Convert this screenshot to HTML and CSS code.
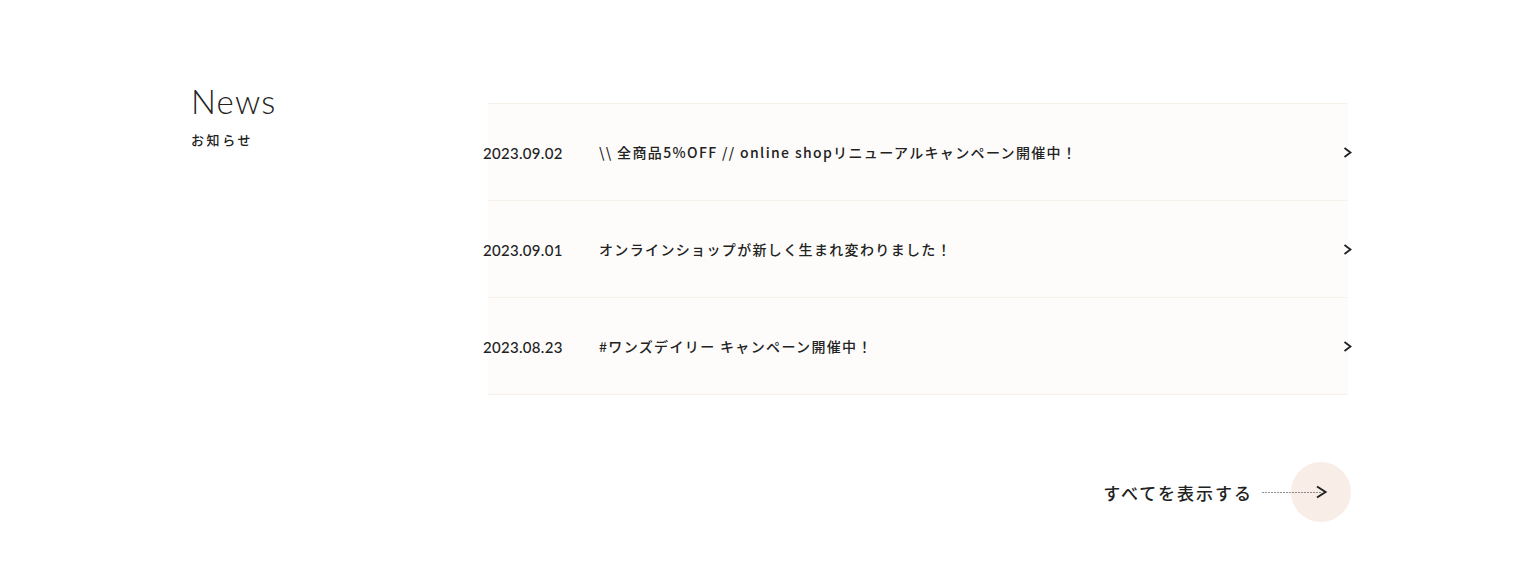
FILE: index.html
```html
<!DOCTYPE html>
<html lang="ja">
<head>
  <meta charset="UTF-8">
  <meta name="viewport" content="width=device-width, initial-scale=1.0">
  <title>News</title>
  <link rel="stylesheet" href="styles.css">
</head>
<body>
  <section class="news">
    <div class="news-head">
      <h2 class="news-title">News</h2>
      <p class="news-sub">お知らせ</p>
    </div>
    <div class="news-body">
      <ul class="news-list">
        <li class="news-item">
          <a href="#">
            <span class="news-date">2023.09.02</span>
            <span class="news-text">\\ 全商品5%OFF // online shopリニューアルキャンペーン開催中！</span>
            <svg class="news-arrow" width="9" height="11" viewBox="0 0 9 11"><polyline points="1.5,1 7.5,5.5 1.5,10" fill="none" stroke="#222" stroke-width="1.8"/></svg>
          </a>
        </li>
        <li class="news-item">
          <a href="#">
            <span class="news-date">2023.09.01</span>
            <span class="news-text">オンラインショップが新しく生まれ変わりました！</span>
            <svg class="news-arrow" width="9" height="11" viewBox="0 0 9 11"><polyline points="1.5,1 7.5,5.5 1.5,10" fill="none" stroke="#222" stroke-width="1.8"/></svg>
          </a>
        </li>
        <li class="news-item">
          <a href="#">
            <span class="news-date">2023.08.23</span>
            <span class="news-text">#ワンズデイリー キャンペーン開催中！</span>
            <svg class="news-arrow" width="9" height="11" viewBox="0 0 9 11"><polyline points="1.5,1 7.5,5.5 1.5,10" fill="none" stroke="#222" stroke-width="1.8"/></svg>
          </a>
        </li>
      </ul>
      <div class="news-more">
        <a href="#" class="more-link">
          <span class="more-label">すべてを表示する</span>
          <span class="more-icon">
            <svg width="66" height="14" viewBox="0 0 66 14"><line x1="0.5" y1="7.5" x2="60" y2="7.5" stroke="#222" stroke-width="1" stroke-dasharray="1 2"/><polyline points="55,1.5 63.5,7 55,12.5" fill="none" stroke="#222" stroke-width="2"/></svg>
          </span>
        </a>
      </div>
    </div>
  </section>
</body>
</html>
```

FILE: styles.css
```css
body {
  margin: 0;
  background: #fff;
  color: #222;
  font-family: "Noto Sans CJK JP", "Noto Sans", sans-serif;
}
a {
  color: inherit;
  text-decoration: none;
}
.news {
  display: flex;
  padding: 85px 185px 0 191px;
}
.news-head {
  width: 292px;
  flex-shrink: 0;
}
.news-title {
  margin: 0;
  font-family: Lato, sans-serif;
  font-weight: 300;
  font-size: 33px;
  line-height: 1;
  letter-spacing: 1.2px;
}
.news-sub {
  margin: 12px 0 0;
  font-size: 13px;
  line-height: 20px;
  font-weight: 500;
  letter-spacing: 2.6px;
}
.news-body {
  flex: 1;
  margin-top: 18px;
}
.news-list {
  list-style: none;
  margin: 0;
  padding: 0;
}
.news-item {
  margin: 0 3px 0 5px;
  border-top: 1px solid #f6f2e9;
  background: #fdfcfb;
}
.news-item:last-child {
  border-bottom: 1px solid #f6f2e9;
}
.news-item a {
  display: flex;
  align-items: center;
  height: 96px;
  margin-left: -5px;
}
.news-date {
  width: 116px;
  flex-shrink: 0;
  font-family: Lato, sans-serif;
  font-size: 15px;
  font-weight: 500;
  letter-spacing: 0.3px;
  padding-top: 2px;
}
.news-text {
  flex: 1;
  font-size: 14px;
  font-weight: 500;
  letter-spacing: 1.35px;
}
.news-arrow {
  margin-right: -4px;
}
.news-more {
  display: flex;
  justify-content: flex-end;
  margin-top: 67px;
}
.more-link {
  display: flex;
  align-items: center;
}
.more-label {
  font-size: 17px;
  font-weight: 500;
  letter-spacing: 2px;
}
.more-icon {
  position: relative;
  display: flex;
  align-items: center;
  width: 89px;
  height: 60px;
  margin-left: 9px;
}
.more-icon::before {
  content: "";
  position: absolute;
  right: 0;
  top: 0;
  width: 60px;
  height: 60px;
  border-radius: 50%;
  background: #f8eee7;
}
.more-icon svg {
  position: relative;
}
```
